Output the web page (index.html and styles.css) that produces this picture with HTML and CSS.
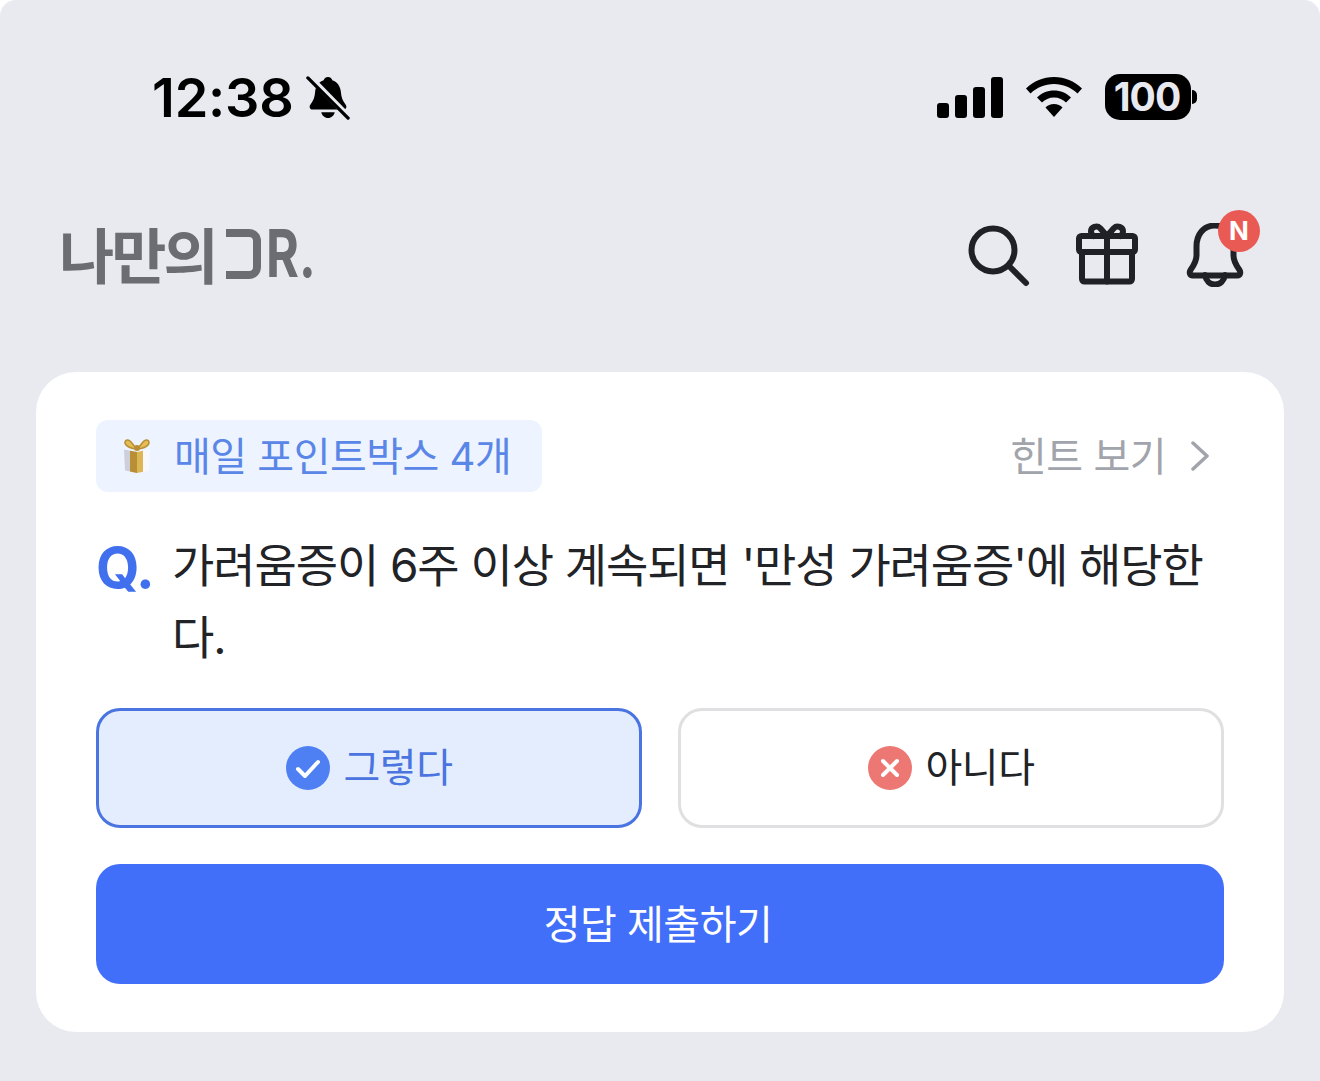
FILE: index.html
```html
<!DOCTYPE html>
<html lang="ko">
<head>
<meta charset="utf-8">
<title>나만의 DR</title>
<link rel="stylesheet" href="styles.css">
</head>
<body>
<div class="screen">
  <div class="status">
    <div class="status-left">
      <span class="time">12:38</span>
      <svg class="mute" width="44" height="48" viewBox="0 0 46 48">
        <path d="M23 2c2.500 0 4 1.500 4.500 3.500C33 7.500 36 12 36.500 18c.4 5 1.500 8.500 5 13 1.500 2 .5 5-2 5H6.500c-2.500 0-3.500-3-2-5C8 26.500 9.100 23 9.500 18c.5-6 3.500-10.500 9-12.500C19 3.500 20.500 2 23 2z" fill="#000"/>
        <path d="M16 39h14c-.6 3.500-3.500 6-7 6s-6.400-2.500-7-6z" fill="#000"/>
        <path d="M3 1 44 43" stroke="#e8eaf0" stroke-width="6"/>
        <path d="M2 3 44 45" stroke="#000" stroke-width="3.500" stroke-linecap="round"/>
      </svg>
    </div>
    <div class="status-right">
      <div class="signal"><i class="b1"></i><i class="b2"></i><i class="b3"></i><i class="b4"></i></div>
      <svg class="wifi" width="58" height="42" viewBox="0 0 58 42">
        <path d="M29 1C18 1 9 5 1 12.500l4.500 5C12 11.500 20 8 29 8s17 3.500 23.500 9.500l4.500-5C49 5 40 1 29 1z" fill="#000"/>
        <path d="M29 14.500c-6.500 0-12.500 2.500-17 7l5 5c3-3 7.200-5 12-5s9 2 12 5l5-5c-4.500-4.500-10.500-7-17-7z" fill="#000"/>
        <path d="M29 28c-3.500 0-6.500 1.300-8.500 3.500L29 41l8.500-9.500C35.500 29.300 32.500 28 29 28z" fill="#000"/>
      </svg>
      <div class="battery"><span class="battery-body">100</span><span class="battery-cap"></span></div>
    </div>
  </div>

  <header class="appbar">
    <div class="logo"><span>나만의</span><span class="logo-d" role="img" aria-label="D"></span><span class="logo-r">R.</span></div>
    <div class="actions">
      <svg class="icon" width="64" height="64" viewBox="0 0 64 64" fill="none" stroke="#1f2126" stroke-width="6" stroke-linecap="round">
        <circle cx="26" cy="27" r="21.500"/>
        <path d="M41.500 42.500 59 60"/>
      </svg>
      <svg class="icon" width="64" height="64" viewBox="0 0 64 64" fill="none" stroke="#1f2126" stroke-width="6" stroke-linejoin="round" stroke-linecap="round">
        <rect x="4" y="13" width="56" height="16" rx="2.500"/>
        <path d="M7 29v27c0 1.500 1 2.500 2.500 2.500h45c1.500 0 2.500-1 2.500-2.500V29"/>
        <path d="M32 13v45.500"/>
        <path d="M32 13 25 5c-3-3-9-1-9 3.500 0 2 1 3.500 2.500 4.500"/>
        <path d="M32 13l7-8c3-3 9-1 9 3.500 0 2-1 3.500-2.500 4.500"/>
      </svg>
      <div class="bell">
        <svg width="64" height="64" viewBox="0 0 64 64" fill="none" stroke="#1f2126" stroke-width="6" stroke-linejoin="round" stroke-linecap="round">
          <path d="M32 2.500c-11.500 0-18.500 9-18.500 21v9c0 5-2 9-6 14.500-1.500 2.500-.5 5.500 2 5.500h45c2.500 0 3.500-3 2-5.500-4-5.500-6-9.500-6-14.500v-9c0-12-7-21-18.500-21z"/>
          <path d="M22 52c1 6 5 9.500 10 9.500S41 58 42 52"/>
        </svg>
        <span class="badge">N</span>
      </div>
    </div>
  </header>

  <main class="card">
    <div class="card-top">
      <div class="chip">
        <svg class="giftbox" width="28" height="36" viewBox="0 0 28 36">
          <path d="M1 11.500 14 14v21L2 32.500z" fill="#cfcfdc"/>
          <path d="M27 11.500 14 14v21l12-2.500z" fill="#f8f8fc"/>
          <path d="M7 12.700l7 1.300v21l-7-1.400z" fill="#b98f35"/>
          <path d="M20 12.800l-6 1.200v21l6-1.300z" fill="#dcb654"/>
          <path d="M14 11C9 7 8 1 4 2S1 10 14 11zM14 11c5-4 6-10 10-9s3 8-10 9z" fill="#e4bd55" stroke="#b98f35" stroke-width="1.500"/>
          <circle cx="14" cy="10" r="3" fill="#b98f35"/>
        </svg>
        <span class="chip-label">매일 포인트박스 4개</span>
      </div>
      <div class="hint">
        <span class="hint-label">힌트 보기</span>
        <svg width="20" height="30" viewBox="0 0 20 30" fill="none" stroke="#a1a4ab" stroke-width="3.500" stroke-linecap="round" stroke-linejoin="round"><path d="M3 2l14 13L3 28"/></svg>
      </div>
    </div>

    <div class="question">
      <span class="q-mark">Q.</span>
      <p class="q-text">가려움증이 6주 이상 계속되면 '만성 가려움증'에 해당한다.</p>
    </div>

    <div class="answers">
      <button class="answer selected">
        <svg width="44" height="44" viewBox="0 0 44 44"><circle cx="22" cy="22" r="22" fill="#4f80f3"/><path d="M12 23l7 7 13-14" fill="none" stroke="#fff" stroke-width="4" stroke-linecap="round" stroke-linejoin="round"/></svg>
        <span class="answer-label">그렇다</span>
      </button>
      <button class="answer">
        <svg width="44" height="44" viewBox="0 0 44 44"><circle cx="22" cy="22" r="22" fill="#ed7773"/><path d="M15 15l14 14M29 15 15 29" fill="none" stroke="#fff" stroke-width="4" stroke-linecap="round"/></svg>
        <span class="answer-label">아니다</span>
      </button>
    </div>

    <button class="submit"><span class="submit-label">정답 제출하기</span></button>
  </main>
</div>
</body>
</html>
```
FILE: styles.css
```css
* { box-sizing: border-box; }
html, body { margin: 0; padding: 0; background: #fff; }
body { font-family: Inter, "Noto Sans CJK KR", sans-serif; }
.screen {
  width: 1320px;
  height: 1081px;
  background: #e8eaf0;
  border-radius: 16px 16px 0 0;
  padding: 0 36px;
  overflow: hidden;
}
.status {
  height: 196px;
  padding: 66px 87px 0 116px;
  display: flex;
  justify-content: space-between;
  align-items: flex-start;
}
.status-left { display: flex; align-items: center; gap: 12px; }
.time {
  font-family: Inter, sans-serif;
  font-size: 54px;
  line-height: 64px;
  font-weight: 600;
  color: #000;
  letter-spacing: -0.2px;
}
.status-right { display: flex; align-items: center; gap: 22px; height: 62px; }
.signal { display: flex; align-items: flex-end; gap: 6px; height: 42px; }
.signal i { display: block; width: 12px; background: #000; border-radius: 3px; }
.b1 { height: 15px; }
.b2 { height: 23px; }
.b3 { height: 31px; }
.b4 { height: 41px; }
.battery { display: flex; align-items: center; gap: 1px; }
.battery-body {
  width: 86px;
  height: 46px;
  background: #000;
  color: #e8eaf0;
  border-radius: 15px;
  font-family: Inter, sans-serif;
  font-size: 39px;
  font-weight: 700;
  line-height: 46px;
  text-align: center;
  letter-spacing: -1px;
  padding-right: 2px;
}
.battery-cap { width: 5px; height: 14px; background: #000; border-radius: 0 5px 5px 0; }
.appbar {
  height: 176px;
  padding: 0 37px 0 23px;
  display: flex;
  justify-content: space-between;
  align-items: flex-start;
}
.logo {
  margin-top: 22px;
  display: flex;
  align-items: center;
  font-family: "Noto Sans CJK KR", sans-serif;
  font-size: 60px;
  line-height: 70px;
  font-weight: 700;
  color: #6b6d72;
  letter-spacing: -3px;
}
.logo-d {
  width: 35px;
  height: 50px;
  margin: 2px 5px 0 10px;
  border: 8px solid #6b6d72;
  border-left: 0;
  border-radius: 0 12px 12px 0;
}
.logo-r {
  display: inline-block;
  font-family: Inter, sans-serif;
  font-size: 66px;
  font-weight: 700;
  letter-spacing: 0;
  transform: scaleX(0.76);
  transform-origin: left center;
}
.actions { margin-top: 27px; display: flex; gap: 44px; }
.icon { display: block; }
.bell { position: relative; width: 64px; height: 64px; }
.bell svg { display: block; }
.badge {
  position: absolute;
  top: -13px;
  right: -13px;
  width: 42px;
  height: 42px;
  border-radius: 50%;
  background: #ea5a54;
  color: #fff;
  font-family: Inter, sans-serif;
  font-size: 26px;
  font-weight: 700;
  line-height: 42px;
  text-align: center;
}
.card {
  width: 1248px;
  height: 660px;
  background: #fff;
  border-radius: 40px;
  padding: 48px 60px;
}
.card-top { display: flex; justify-content: space-between; align-items: center; }
.chip {
  width: 446px;
  height: 72px;
  background: #edf4ff;
  border-radius: 12px;
  padding-left: 27px;
  display: flex;
  align-items: center;
  gap: 23px;
  font-size: 40px;
  color: #5a86e8;
  white-space: nowrap;
}
.chip-label { letter-spacing: -0.5px; position: relative; top: -2px; }
.hint {
  display: flex;
  align-items: center;
  gap: 24px;
  padding-right: 14px;
  font-size: 40px;
  color: #a1a4ab;
}
.hint-label { letter-spacing: -0.5px; position: relative; top: -2px; }
.question { margin-top: 36px; display: flex; }
.q-mark {
  flex: 0 0 76px;
  font-family: Inter, sans-serif;
  font-size: 56px;
  line-height: 72px;
  font-weight: 700;
  color: #4070ee;
  letter-spacing: -1px;
  padding-top: 4px;
}
.q-text {
  margin: 0;
  font-size: 46px;
  line-height: 72px;
  color: #212327;
  letter-spacing: -1.1px;
  padding-top: 1px;
}
.answers { margin-top: 35px; display: flex; gap: 36px; }
.answer {
  flex: 1;
  height: 120px;
  border: 3px solid #e0e0e2;
  border-radius: 24px;
  background: #fff;
  display: flex;
  align-items: center;
  justify-content: center;
  gap: 14px;
  font-family: inherit;
  font-size: 40px;
  color: #212327;
  padding: 0;
}
.answer-label { letter-spacing: -0.5px; position: relative; top: -3px; }
.answer.selected { background: #e3edfd; border-color: #4a74e0; color: #4a74e0; }
.submit {
  margin-top: 36px;
  width: 100%;
  height: 120px;
  border: 0;
  border-radius: 24px;
  background: #426ffa;
  color: #fff;
  font-family: inherit;
  font-size: 40px;
  padding: 0 4px 0 0;
}
.submit-label { letter-spacing: -0.5px; position: relative; top: -2px; }
```
